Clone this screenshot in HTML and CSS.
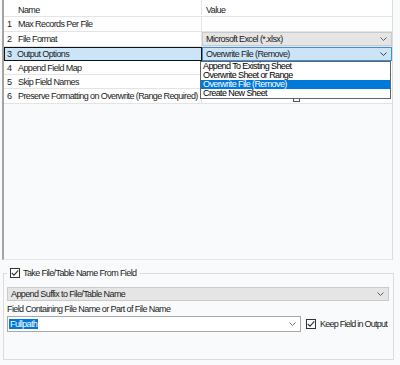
FILE: index.html
```html
<!DOCTYPE html>
<html>
<head>
<meta charset="utf-8">
<link rel="stylesheet" href="styles.css">
</head>
<body>
<div class="grid">
  <div class="row head">
    <div class="num"></div>
    <div class="name">Name</div>
    <div class="value">Value</div>
  </div>
  <div class="row r15">
    <div class="num">1</div>
    <div class="name">Max Records Per File</div>
    <div class="value"></div>
  </div>
  <div class="row r15">
    <div class="num">2</div>
    <div class="name">File Format</div>
    <div class="value"><div class="combo gray"><span>Microsoft Excel (*.xlsx)</span><svg class="chev" viewBox="0 0 7 4" width="7" height="4"><path d="M0.5 0.5 L3.5 3.5 L6.5 0.5" fill="none" stroke="#606060" stroke-width="1"/></svg></div></div>
  </div>
  <div class="row r14 sel">
    <div class="selname"><span class="n">3</span><span>Output Options</span></div>
    <div class="value"><div class="combo blue"><span>Overwrite File (Remove)</span><svg class="chev" viewBox="0 0 7 4" width="7" height="4"><path d="M0.5 0.5 L3.5 3.5 L6.5 0.5" fill="none" stroke="#404040" stroke-width="1"/></svg></div></div>
  </div>
  <div class="row r14">
    <div class="num">4</div>
    <div class="name">Append Field Map</div>
    <div class="value"></div>
  </div>
  <div class="row r14">
    <div class="num">5</div>
    <div class="name">Skip Field Names</div>
    <div class="value"></div>
  </div>
  <div class="row r15">
    <div class="num">6</div>
    <div class="name">Preserve Formatting on Overwrite (Range Required)</div>
    <div class="value center"><span class="cb small"></span></div>
  </div>
  <ul class="dropdown">
    <li>Append To Existing Sheet</li>
    <li>Overwrite Sheet or Range</li>
    <li class="hl">Overwrite File (Remove)</li>
    <li>Create New Sheet</li>
  </ul>
</div>

<fieldset class="group">
  <legend><span class="cb checked"><svg viewBox="0 0 10 10" width="10" height="10"><path d="M1.8 5 L4 7.2 L8.3 2.4" fill="none" stroke="#333" stroke-width="1.1"/></svg></span><span>Take File/Table Name From Field</span></legend>
  <div class="combo gray wide"><span>Append Suffix to File/Table Name</span><svg class="chev" viewBox="0 0 7 4" width="7" height="4"><path d="M0.5 0.5 L3.5 3.5 L6.5 0.5" fill="none" stroke="#606060" stroke-width="1"/></svg></div>
  <div class="label">Field Containing File Name or Part of File Name</div>
  <div class="line">
    <div class="combo white field"><span class="seltext">Fullpath</span><svg class="chev" viewBox="0 0 7 4" width="7" height="4"><path d="M0.5 0.5 L3.5 3.5 L6.5 0.5" fill="none" stroke="#707070" stroke-width="1"/></svg></div>
    <span class="cb checked"><svg viewBox="0 0 10 10" width="10" height="10"><path d="M1.8 5 L4 7.2 L8.3 2.4" fill="none" stroke="#333" stroke-width="1.1"/></svg></span>
    <span class="keep">Keep Field in Output</span>
  </div>
</fieldset>
</body>
</html>
```
FILE: styles.css
```css
* { box-sizing: border-box; }
html, body {
  margin: 0;
  padding: 0;
  background: #f9fafc;
  font-family: "Liberation Sans", Arial, sans-serif;
  font-size: 9px;
  color: #1a1a1a;
  letter-spacing: -0.6px;
  white-space: nowrap;
}
.grid {
  position: relative;
  margin-left: 2px;
  width: 391px;
  height: 260px;
  border-left: 2px solid #a4a4a4;
  border-right: 1px solid #dcdcdc;
  border-bottom: 1px solid #e6e6e6;
  background: #f9fafc;
}
.row {
  display: flex;
  background: #fff;
  border-bottom: 1px solid #e4e4e4;
}
.row.head { height: 17px; align-items: flex-start; }
.row.head .name, .row.head .value { padding-top: 5px; }
.r15 { height: 15px; }
.r14 { height: 14px; }
.num {
  width: 12px;
  padding-left: 3px;
  display: flex;
  align-items: center;
}
.name {
  width: 186px;
  padding-left: 2px;
  display: flex;
  align-items: center;
  border-right: 1px solid #e4e4e4;
}
.value {
  flex: 1;
  display: flex;
  align-items: center;
}
.head .name, .head .value { align-items: flex-start; }
.head .value { padding-left: 4px; }
.value.center { justify-content: center; padding-left: 0; padding-right: 2px; }
.sel { border-bottom: none; }
.selname {
  width: 198px;
  display: flex;
  align-items: center;
  background: #cce4f7;
  border: 1px solid #111;
}
.selname .n { width: 12px; padding-left: 2px; }
.combo {
  display: flex;
  align-items: center;
  justify-content: space-between;
  height: 100%;
  padding: 0 4px 0 3px;
  border: 1px solid #c4c4c4;
}
.value .combo { width: 190px; }
.combo.gray { background: #e5e5e5; border-color: #cacaca; }
.combo.blue { background: #cce4f7; border-color: #3f8fd6; }
.chev { display: block; }
.cb {
  display: inline-block;
  flex: none;
  width: 10px;
  height: 10px;
  border: 1px solid #333;
  background: #fff;
  position: relative;
}
.cb svg { position: absolute; left: -1px; top: -1px; }
.cb.small { width: 7px; height: 6px; border-color: #555; margin-top: 6px; }
.dropdown {
  position: absolute;
  left: 196px;
  top: 61px;
  width: 191px;
  margin: 0;
  padding: 0;
  list-style: none;
  background: #fff;
  border: 1px solid #646464;
}
.dropdown li {
  height: 9px;
  line-height: 9px;
  padding-left: 2px;
  font-size: 9px;
  color: #000;
}
.dropdown li.hl { background: #0078d7; color: #fff; }
.group {
  margin: 8px 0 0 3px;
  width: 391px;
  height: 92px;
  padding: 9px 3px 0 3px;
  border: 1px solid #dcdcdc;
}
.group legend {
  padding: 0 4px 0 3px;
  margin-left: 0;
  display: flex;
  align-items: center;
  gap: 3px;
  font-size: 9px;
}
.combo.wide { height: 14px; width: 382px; }
.label { margin-top: 3px; height: 11px; line-height: 11px; }
.line { display: flex; align-items: center; margin-top: 1px; }
.combo.field { width: 294px; height: 16px; background: #fff; border-color: #a8a8a8; padding-left: 1px; }
.seltext { background: #0078d7; color: #fff; padding: 0 1px; }
.line .cb { margin-left: 5px; }
.keep { margin-left: 4px; letter-spacing: -0.75px; }
```
